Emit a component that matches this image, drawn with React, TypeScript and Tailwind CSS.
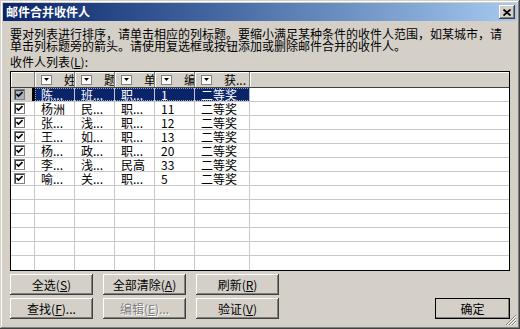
import React from "react";

const rows = [
  ["陈...", "班...", "职...", "1", "二等奖"],
  ["杨洲", "民...", "职...", "11", "二等奖"],
  ["张...", "浅...", "职...", "12", "二等奖"],
  ["王...", "如...", "职...", "13", "二等奖"],
  ["杨...", "政...", "职...", "20", "二等奖"],
  ["李...", "浅...", "民高", "33", "二等奖"],
  ["喻...", "关...", "职...", "5", "二等奖"],
];

const headers = ["姓名", "题目", "单位", "编号", "获..."];
const widths = ["w-[40px]", "w-[40px]", "w-[40px]", "w-[40px]", "w-[55px]"];

const raised =
  "bg-[#d4d0c8] shadow-[inset_-1px_-1px_#404040,inset_1px_1px_#ffffff,inset_-2px_-2px_#808080,inset_2px_2px_#d4d0c8]";

function Check({ selected }: { selected?: boolean }) {
  return (
    <div
      className={`flex h-[11px] w-[11px] items-center justify-center border border-[#808080] ${
        selected ? "bg-[#aab0c8]" : "bg-white"
      } shadow-[inset_1px_1px_#404040]`}
    >
      <svg width="7" height="7" viewBox="0 0 7 7">
        <polyline points="0.5,3 2.5,5 6.5,1" fill="none" stroke="#000" strokeWidth="1.6" />
      </svg>
    </div>
  );
}

function DropBtn() {
  return (
    <div className="flex h-[10px] w-[11px] shrink-0 items-center justify-center border border-[#808080] bg-white">
      <svg width="5" height="3" viewBox="0 0 5 3">
        <polygon points="0,0 5,0 2.5,3" fill="#000" />
      </svg>
    </div>
  );
}

function Btn({ children, disabled, def, w = "w-[83px]" }: { children: React.ReactNode; disabled?: boolean; def?: boolean; w?: string }) {
  return (
    <div
      className={`${w} flex h-[21px] items-center justify-center text-[12px] ${raised} ${
        def ? "outline outline-1 outline-black -outline-offset-1" : ""
      } ${disabled ? "text-[#808080] [text-shadow:1px_1px_#ffffff]" : "text-black"}`}
    >
      {children}
    </div>
  );
}

export default function App() {
  const empty = Array.from({ length: 6 });
  return (
    <div className="relative h-[329px] w-[520px] overflow-hidden bg-[#d4d0c8] p-[3px] font-['Noto_Sans_CJK_SC','Noto_Sans',sans-serif] text-black shadow-[inset_-1px_-1px_#404040,inset_1px_1px_#d4d0c8,inset_-2px_-2px_#808080,inset_2px_2px_#ffffff]">
      {/* title bar */}
      <div className="flex h-[18px] items-center justify-between bg-gradient-to-r from-[#0a246a] to-[#a6caf0] pl-[3px] pr-[2px]">
        <span className="text-[12px] font-bold leading-[12px] text-white">邮件合并收件人</span>
        <div className={`flex h-[14px] w-[16px] items-center justify-center ${raised}`}>
          <svg width="8" height="7" viewBox="0 0 8 7">
            <path d="M0.5 0.5 L7.5 6.5 M7.5 0.5 L0.5 6.5" stroke="#000" strokeWidth="1.8" />
          </svg>
        </div>
      </div>

      <div className="px-[7px]">
        <p className="mt-[7px] whitespace-nowrap text-[12px] leading-[12px]">
          要对列表进行排序，请单击相应的列标题。要缩小满足某种条件的收件人范围，如某城市，请
          <br />
          单击列标题旁的箭头。请使用复选框或按钮添加或删除邮件合并的收件人。
        </p>
        <p className="mt-[4px] text-[12px] leading-[12px]">
          收件人列表(<u>L</u>):
        </p>

        {/* grid */}
        <div className="mt-[3px] h-[200px] w-[500px] border border-black bg-white">
          <div className="flex h-[16px] border-b border-[#404040] bg-[#d4d0c8] text-[12px]">
            <div className="w-[24px] shrink-0 border-r border-[#808080] shadow-[inset_1px_1px_#ffffff]" />
            {headers.map((h, i) => (
              <div
                key={i}
                className={`${widths[i]} flex shrink-0 items-center overflow-hidden whitespace-nowrap border-r border-[#808080] pl-[6px] shadow-[inset_1px_1px_#ffffff]`}
              >
                <DropBtn />
                <span className="ml-[12px] leading-[14px]">{h}</span>
              </div>
            ))}
            <div className="flex-1 shadow-[inset_1px_1px_#ffffff]" />
          </div>

          {rows.map((r, ri) => {
            const sel = ri === 0;
            return (
              <div key={ri} className="flex h-[14px] border-b border-[#c8c8c8] text-[12px]">
                <div
                  className={`flex w-[24px] shrink-0 items-center pl-[3px] ${
                    sel ? "bg-[#d4d0c8]" : "border-r border-[#c8c8c8] bg-white"
                  }`}
                >
                  <Check selected={sel} />
                  {sel && <div className="ml-auto h-full w-[3px] bg-black" />}
                </div>
                <div
                  className={`flex shrink-0 ${
                    sel ? "bg-[#0a246a] text-white outline outline-1 -outline-offset-1 outline-dotted outline-[#9aa6c8]" : ""
                  }`}
                >
                  {r.map((c, ci) => (
                    <div
                      key={ci}
                      className={`${widths[ci]} flex shrink-0 items-center overflow-hidden whitespace-nowrap border-r border-[#c8c8c8] pl-[6px] leading-[13px]`}
                    >
                      {c}
                    </div>
                  ))}
                </div>
                <div className="flex-1" />
              </div>
            );
          })}

          {empty.map((_, i) => (
            <div key={i} className={`flex h-[14px] ${i < 5 ? "border-b border-[#c8c8c8]" : ""}`}>
              <div className="w-[24px] shrink-0 border-r border-[#c8c8c8]" />
              {widths.map((w, ci) => (
                <div key={ci} className={`${w} shrink-0 border-r border-[#c8c8c8]`} />
              ))}
              <div className="flex-1" />
            </div>
          ))}
        </div>

        {/* buttons */}
        <div className="mt-[3px] flex gap-[10px]">
          <Btn>
            全选(<u>S</u>)
          </Btn>
          <Btn>
            全部清除(<u>A</u>)
          </Btn>
          <Btn>
            刷新(<u>R</u>)
          </Btn>
        </div>
        <div className="mt-[3px] flex gap-[10px]">
          <Btn>
            查找(<u>F</u>)...
          </Btn>
          <Btn disabled>
            编辑(<u>E</u>)...
          </Btn>
          <Btn>
            验证(<u>V</u>)
          </Btn>
          <div className="ml-auto">
            <Btn def w="w-[75px]">
              确定
            </Btn>
          </div>
        </div>
      </div>

      {/* size grip */}
      <svg className="absolute bottom-[3px] right-[3px]" width="12" height="12" viewBox="0 0 12 12">
        <path d="M11 1 L1 11 M11 4 L4 11 M11 7 L7 11" stroke="#808080" strokeWidth="1" />
        <path d="M11 2 L2 11 M11 5 L5 11 M11 8 L8 11" stroke="#ffffff" strokeWidth="1" />
      </svg>
    </div>
  );
}
